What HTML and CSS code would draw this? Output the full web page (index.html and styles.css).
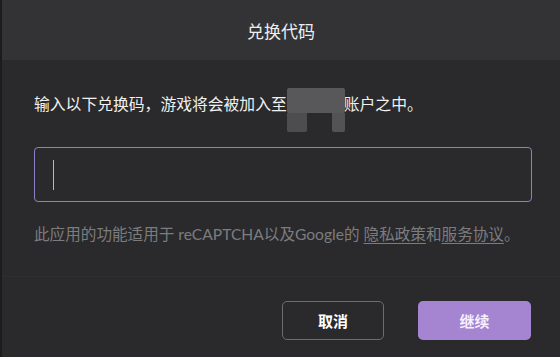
FILE: index.html
```html
<!DOCTYPE html>
<html lang="zh-CN">
<head>
    <meta charset="UTF-8">
    <meta name="viewport" content="width=device-width, initial-scale=1.0">
    <title>兑换代码</title>
    <link rel="stylesheet" href="styles.css">
</head>
<body>
    <div class="dialog">
        <header class="dialog-header">
            <h1 class="dialog-title">兑换代码</h1>
        </header>
        <main class="dialog-body">
            <p class="intro">输入以下兑换码，游戏将会被加入至<span class="account-name"><span class="blur-top"></span><span class="blur-left"></span><span class="blur-right"></span></span>账户之中。</p>
            <div class="code-field">
                <span class="caret"></span>
            </div>
            <p class="notice">此应用的功能适用于 reCAPTCHA以及Google的 <a href="#">隐私政策</a>和<a href="#">服务协议</a>。</p>
        </main>
        <footer class="dialog-footer">
            <button class="btn btn-cancel">取消</button>
            <button class="btn btn-continue">继续</button>
        </footer>
    </div>
</body>
</html>
```

FILE: styles.css
```css
:root {
    --header-bg: #333336;
    --body-bg: #2a2a2c;
    --accent: #a584d2;
    --text-color: #ececec;
    --muted: #7c7c7f;
}
html, body {
    margin: 0;
    padding: 0;
    background-color: var(--body-bg);
}
body {
    font-family: 'Lato', 'Noto Sans CJK SC', sans-serif;
    color: var(--text-color);
}
.dialog {
    width: 560px;
    height: 357px;
    box-sizing: border-box;
    border-left: 2px solid #1c1c1d;
    display: flex;
    flex-direction: column;
    background-color: var(--body-bg);
}
.dialog-header {
    height: 60px;
    background-color: var(--header-bg);
    display: flex;
    align-items: center;
    justify-content: center;
}
.dialog-title {
    margin: 0;
    font-size: 17px;
    font-weight: 400;
    color: #eeeeee;
}
.dialog-body {
    padding: 34px 28px 0 32px;
    height: 182px;
    border-bottom: 1px solid #2e2e31;
}
.intro {
    margin: 0;
    font-size: 15.8px;
    line-height: 20px;
    color: #f0f0f0;
    white-space: nowrap;
}
.account-name {
    display: inline-block;
    position: relative;
    width: 57px;
    height: 20px;
    vertical-align: top;
}
.account-name span {
    position: absolute;
    background-color: #58585a;
}
.blur-top {
    left: 0;
    top: -6px;
    width: 58px;
    height: 25px;
    border-radius: 2px;
}
.blur-left {
    left: 0;
    top: 19px;
    width: 20px;
    height: 19px;
    background-color: #4d4d50 !important;
    border-radius: 0 0 2px 2px;
}
.blur-right {
    left: 45px;
    top: 19px;
    width: 13px;
    height: 19px;
    background-color: #535356 !important;
    border-radius: 0 0 2px 2px;
}
.code-field {
    margin-top: 33px;
    height: 53px;
    border: 1.5px solid #8d80c4;
    border-radius: 4px;
    display: flex;
    align-items: center;
    padding-left: 18px;
}
.caret {
    width: 1px;
    height: 30px;
    background-color: #b8b8bb;
}
.notice {
    margin: 22px 0 0;
    font-size: 15.6px;
    line-height: 20px;
    color: var(--muted);
    white-space: nowrap;
}
.notice a {
    color: var(--muted);
    text-decoration: underline;
    text-underline-offset: 3px;
}
.dialog-footer {
    flex: 1;
    display: flex;
    justify-content: flex-end;
    align-items: flex-start;
    gap: 34px;
    padding: 24px 29px 0 0;
}
.btn {
    height: 39px;
    border-radius: 5px;
    font-family: 'Noto Sans CJK SC', sans-serif;
    font-size: 15px;
    font-weight: 700;
    cursor: pointer;
}
.btn-cancel {
    width: 102px;
    background-color: transparent;
    border: 1.5px solid #6d6d70;
    color: #ffffff;
}
.btn-continue {
    width: 113px;
    background-color: var(--accent);
    border: none;
    color: #f6efff;
}
```
